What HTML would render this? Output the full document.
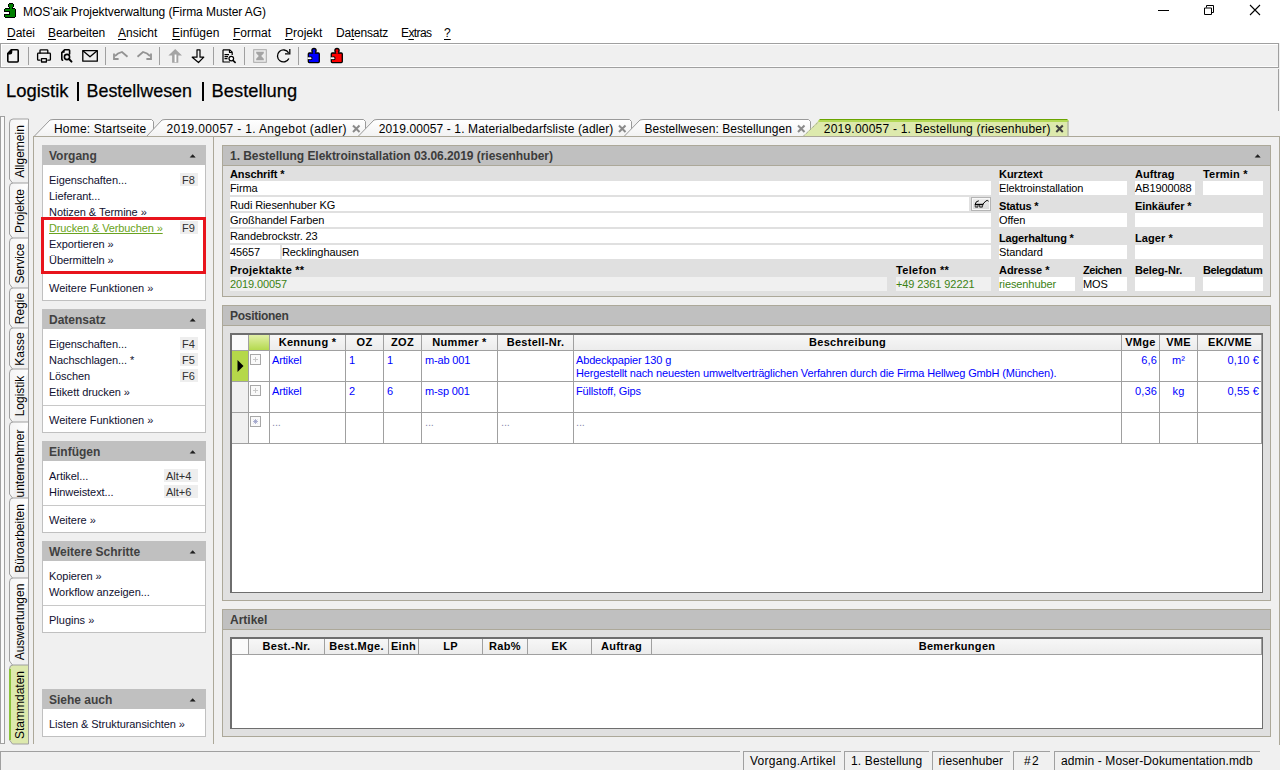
<!DOCTYPE html><html><head><meta charset="utf-8"><style>
*{margin:0;padding:0;box-sizing:border-box}
html,body{width:1280px;height:770px;overflow:hidden}
body{background:#f0f0f0;font-family:"Liberation Sans",sans-serif;position:relative;color:#000}
.t{position:absolute;white-space:nowrap}
.r{position:absolute}
svg{position:absolute;overflow:visible}
u{text-decoration:underline;text-underline-offset:2px;text-decoration-thickness:1px}
</style></head><body>
<div class="r" style="left:0px;top:0px;width:1280px;height:22px;background:#fff"></div>
<svg style="left:0;top:0" width="22" height="22" viewBox="0 0 22 22" shape-rendering="crispEdges">
<g fill="#008000"><rect x="9" y="4" width="4" height="3"/><rect x="10" y="7" width="2" height="1"/><rect x="5" y="8" width="10" height="9"/></g>
<g fill="#000"><rect x="9" y="3" width="4" height="1"/><rect x="8" y="4" width="1" height="3"/><rect x="13" y="4" width="1" height="3"/><rect x="9" y="7" width="1" height="1"/><rect x="12" y="7" width="1" height="1"/>
<rect x="5" y="8" width="5" height="1"/><rect x="12" y="8" width="3" height="1"/><rect x="4" y="9" width="1" height="3"/><rect x="4" y="14" width="1" height="3"/><rect x="15" y="9" width="1" height="8"/><rect x="5" y="17" width="10" height="1"/>
<rect x="5" y="11" width="4" height="1"/><rect x="9" y="11" width="1" height="4"/><rect x="5" y="14" width="4" height="1"/></g>
<rect x="4" y="12" width="5" height="2" fill="#fff"/>
</svg>
<div class="t " style="left:23px;top:5px;font-size:12px;line-height:14px;color:#000;letter-spacing:-0.062px">MOS&#x27;aik Projektverwaltung (Firma Muster AG)</div>
<div class="r" style="left:1158px;top:10px;width:11px;height:1px;background:#000"></div>
<svg style="left:1200px;top:0" width="20" height="20"><path d="M4.5,8 H11.5 V14.5 H4.5 Z M6.5,7.5 V5.5 H13.5 V12.5 H11.5" fill="none" stroke="#000" stroke-width="1"/></svg>
<svg style="left:1245px;top:0" width="20" height="20"><path d="M5 5l10 10M15 5l-10 10" stroke="#000" stroke-width="1.1"/></svg>
<div class="r" style="left:0px;top:22px;width:1280px;height:21px;background:#fff"></div>
<div class="t " style="left:7px;top:26px;font-size:12px;line-height:14px;color:#000;letter-spacing:0.000px"><u>D</u>atei</div>
<div class="t " style="left:48px;top:26px;font-size:12px;line-height:14px;color:#000;letter-spacing:-0.103px"><u>B</u>earbeiten</div>
<div class="t " style="left:118px;top:26px;font-size:12px;line-height:14px;color:#000;letter-spacing:0.000px"><u>A</u>nsicht</div>
<div class="t " style="left:172px;top:26px;font-size:12px;line-height:14px;color:#000;letter-spacing:0.000px"><u>E</u>infügen</div>
<div class="t " style="left:233px;top:26px;font-size:12px;line-height:14px;color:#000;letter-spacing:0.000px"><u>F</u>ormat</div>
<div class="t " style="left:285px;top:26px;font-size:12px;line-height:14px;color:#000;letter-spacing:0.000px"><u>P</u>rojekt</div>
<div class="t " style="left:336px;top:26px;font-size:12px;line-height:14px;color:#000;letter-spacing:-0.224px">Da<u>t</u>ensatz</div>
<div class="t " style="left:401px;top:26px;font-size:12px;line-height:14px;color:#000;letter-spacing:-0.583px">E<u>x</u>tras</div>
<div class="t " style="left:444px;top:26px;font-size:12px;line-height:14px;color:#000;letter-spacing:0.000px"><u>?</u></div>
<div class="r" style="left:0px;top:43px;width:1279px;height:25px;background:#f0f0f0;border:1px solid #a0a0a0"></div>
<div class="r" style="left:1px;top:44px;width:1277px;height:1px;background:#fff"></div>
<div class="r" style="left:1px;top:44px;width:1px;height:23px;background:#fff"></div>
<div class="r" style="left:1px;top:66px;width:1277px;height:1px;background:#fcfcfc"></div>
<svg style="left:0;top:0" width="360" height="70" viewBox="0 0 360 70">
<g fill="none" stroke="#000" stroke-width="1.6" stroke-linejoin="round" stroke-linecap="round">
<path d="M11.5,49.8 H17.2 Q18.2,49.8 18.2,50.8 V61 Q18.2,62 17.2,62 H8.8 Q7.8,62 7.8,61 V53.5 Z"/>
<path d="M7.8,53.8 L11.5,49.8 L11.5,52.2 Q11.5,53.8 10,53.8 Z" fill="#000"/>
<path stroke-width="1.3" d="M40,53 V50.5 Q40,49.8 40.8,49.8 H47 Q47.8,49.8 47.8,50.5 V53"/>
<path stroke-width="1.3" d="M40,60.2 H38.3 Q37.6,60.2 37.6,59.4 V54 Q37.6,53.2 38.4,53.2 H49.6 Q50.4,53.2 50.4,54 V59.4 Q50.4,60.2 49.6,60.2 H47.8"/>
<path stroke-width="1.3" d="M41.5,58.6 H46.4 V62 H41.5 Z"/>
<path stroke-width="1.3" d="M82.8,50.6 H97.3 V61.2 H82.8 Z"/>
<path stroke-width="1.3" d="M83.2,51 L90,56.8 L96.8,51"/>
<path d="M69.6,54 V50.6 Q69.6,49.8 68.8,49.8 H64.6 L61.8,52.6 V59 Q61.8,59.8 62.6,60.2"/>
<circle cx="67" cy="57" r="2.6"/>
<path d="M69,59 L71.5,61.6" stroke-width="2"/>
</g>
<path d="M61.8,52.8 L64.6,49.8 L64.6,52.8 Z" fill="#000"/>
<g fill="none" stroke="#939393" stroke-width="1.8" stroke-linejoin="miter">
<path d="M115,56 L118,53.5 L122,52 L127.5,56.8"/>
<path d="M114,53.5 V59 H118.6"/>
<path d="M150,56 L147,53.5 L143,52 L137.5,56.8"/>
<path d="M151,53.5 V59 H146.4"/>
</g>
<path d="M175.2,49 L182,55.5 H178.3 V62.7 H172.1 V55.5 H168.4 Z" fill="#a4a4a4"/>
<path d="M174.6,54.5 H176.4 V62.2 H174.6 Z" fill="#fff"/>
<path d="M197,49.8 H200 V57.2 H203.8 L198.5,62.5 L192.2,57.2 H197 Z" fill="none" stroke="#000" stroke-width="1.2" stroke-linejoin="round"/>
<g fill="none" stroke="#000" stroke-width="1.2" stroke-linejoin="round">
<path d="M223,49.8 H229.8 L232.2,52.2 V55 M223,49.8 V62 H230"/>
<path d="M229.5,50 V52.5 H232"/>
<path d="M224.5,54.6 H229 M224.5,56.6 H228 M224.5,58.6 H227.5" stroke-width="1.1"/>
<circle cx="231.3" cy="58.6" r="2.3" fill="#fff"/>
<path d="M233,60.4 L235.6,62.8" stroke-width="1.6"/>
</g>
<rect x="253.7" y="49.7" width="12.6" height="12.6" fill="#ececec" stroke="#a8a8a8" stroke-width="1"/>
<path d="M256.2,51.8 H263.8 V53.2 L261.2,56 L263.8,58.8 V60.2 H256.2 V58.8 L258.8,56 L256.2,53.2 Z" fill="#a4a4a4"/>
<path d="M288.6,52.8 A6,6 0 1 0 288.9,58.5" fill="none" stroke="#000" stroke-width="1.3"/>
<path d="M289.8,49 V53.8 H285" fill="none" stroke="#000" stroke-width="1.3"/>
<g transform="translate(0,0)" stroke="#000" stroke-width="1.3" stroke-linejoin="round">
<path d="M309.3,53 H318.3 Q319.3,53 319.3,54 V61.6 Q319.3,62.6 318.3,62.6 H309.3 Q308.3,62.6 308.3,61.6 V54 Q308.3,53 309.3,53 Z" fill="#0000ff"/>
<circle cx="314" cy="50.6" r="2.1" fill="#0000ff"/>
<rect x="312.9" y="51.5" width="2.2" height="2.2" fill="#0000ff" stroke="none"/>
<circle cx="310.6" cy="58.2" r="1.5" fill="#fff" stroke-width="1.1"/>
<rect x="307.6" y="57.3" width="2.6" height="1.8" fill="#fff" stroke="none"/>
</g>
<g transform="translate(23,0)" stroke="#000" stroke-width="1.3" stroke-linejoin="round">
<path d="M309.3,53 H318.3 Q319.3,53 319.3,54 V61.6 Q319.3,62.6 318.3,62.6 H309.3 Q308.3,62.6 308.3,61.6 V54 Q308.3,53 309.3,53 Z" fill="#ff0000"/>
<circle cx="314" cy="50.6" r="2.1" fill="#ff0000"/>
<rect x="312.9" y="51.5" width="2.2" height="2.2" fill="#ff0000" stroke="none"/>
<circle cx="310.6" cy="58.2" r="1.5" fill="#fff" stroke-width="1.1"/>
<rect x="307.6" y="57.3" width="2.6" height="1.8" fill="#fff" stroke="none"/>
</g>
<g stroke="#a0a0a0" stroke-width="1">
<path d="M28.5,47 V65 M105.5,47 V65 M159.5,47 V65 M213.5,47 V65 M244.5,47 V65 M298.5,47 V65"/>
</g>
</svg>
<svg style="left:0;top:0" width="320" height="110"><g font-family="Liberation Sans" font-size="19" fill="#000" stroke="#000" stroke-width="0.25"><text x="6" y="97" textLength="62.5" lengthAdjust="spacingAndGlyphs">Logistik</text><text x="86.5" y="97" textLength="105.5" lengthAdjust="spacingAndGlyphs">Bestellwesen</text><text x="211.6" y="97" textLength="85.5" lengthAdjust="spacingAndGlyphs">Bestellung</text></g><rect x="77" y="82" width="2" height="19" fill="#000"/><rect x="202" y="82" width="2" height="19" fill="#000"/></svg>
<div class="r" style="left:1278px;top:69px;width:1px;height:42px;background:#a0a0a0"></div>
<svg style="left:0;top:0" width="1280" height="140" viewBox="0 0 1280 140">
<defs><linearGradient id="tg" x1="0" y1="0" x2="0" y2="1"><stop offset="0" stop-color="#ffffff"/><stop offset="1" stop-color="#f2f2f2"/></linearGradient></defs>
<path d="M34,136.5 L50,120 Q52,119.5 54,119.5 L151.5,119.5 L153.5,121.5 L153.5,136.5" fill="url(#tg)" stroke="#9a9a9a" stroke-width="1"/>
<path d="M146.5,136.5 L162,120 Q164,119.5 166,119.5 L363.5,119.5 L365.5,121.5 L365.5,136.5" fill="url(#tg)" stroke="#9a9a9a" stroke-width="1"/>
<path d="M353,125.5 L359.5,132 M359.5,125.5 L353,132" stroke="#8a8a8a" stroke-width="2"/>
<path d="M358,136.5 L374,120 Q376,119.5 378,119.5 L629.5,119.5 L631.5,121.5 L631.5,136.5" fill="url(#tg)" stroke="#9a9a9a" stroke-width="1"/>
<path d="M619,125.5 L625.5,132 M625.5,125.5 L619,132" stroke="#8a8a8a" stroke-width="2"/>
<path d="M624,136.5 L640,120 Q642,119.5 644,119.5 L808.5,119.5 L810.5,121.5 L810.5,136.5" fill="url(#tg)" stroke="#9a9a9a" stroke-width="1"/>
<path d="M798,125.5 L804.5,132 M804.5,125.5 L798,132" stroke="#8a8a8a" stroke-width="2"/>
<path d="M803,136.5 L819,120 Q821,119 823,119 L1067.0,119 L1068.5,120.5 L1068.5,136.5 Z" fill="#dde9ad" stroke="none"/>
<path d="M803,136.5 L820,120.5" stroke="#8a8a8a" stroke-width="1" stroke-dasharray="1,1" fill="none"/>
<path d="M819.5,119.5 L1067.5,119.5" stroke="#6aa400" stroke-width="1"/>
<path d="M818.5,121 L1068.5,121" stroke="#b3d957" stroke-width="2"/>
<path d="M1068.0,121 L1068.0,136.5" stroke="#a0a0a0" stroke-width="1"/>
<path d="M1056.3,125.5 L1062.8,132 M1062.8,125.5 L1056.3,132" stroke="#404040" stroke-width="2"/>
<path d="M33.5,136.5 L1279.5,136.5" stroke="#aca899" stroke-width="1"/>
</svg>
<div class="t " style="left:54px;top:122px;font-size:12px;line-height:14px;color:#000;letter-spacing:0.191px">Home: Startseite</div>
<div class="t " style="left:166.5px;top:122px;font-size:12px;line-height:14px;color:#000;letter-spacing:0.355px">2019.00057 - 1. Angebot (adler)</div>
<div class="t " style="left:378.75px;top:122px;font-size:12px;line-height:14px;color:#000;letter-spacing:0.120px">2019.00057 - 1. Materialbedarfsliste (adler)</div>
<div class="t " style="left:644.4px;top:122px;font-size:12px;line-height:14px;color:#000;letter-spacing:0.029px">Bestellwesen: Bestellungen</div>
<div class="t " style="left:823.75px;top:122px;font-size:12px;line-height:14px;color:#000;letter-spacing:0.220px">2019.00057 - 1. Bestellung (riesenhuber)</div>
<div class="r" style="left:0px;top:116px;width:1px;height:628px;background:#a0a0a0"></div>
<div class="r" style="left:4px;top:116px;width:1px;height:628px;background:#a0a0a0"></div>
<div class="r" style="left:1px;top:116px;width:3px;height:1px;background:#a0a0a0"></div>
<div class="r" style="left:1px;top:117px;width:3px;height:626px;background:#fafafa"></div>
<div class="r" style="left:0px;top:743px;width:5px;height:1px;background:#a0a0a0"></div>
<svg style="left:0;top:0" width="40" height="770" viewBox="0 0 40 770">
<defs><linearGradient id="vg" x1="0" y1="0" x2="1" y2="0"><stop offset="0" stop-color="#f4f4f4"/><stop offset="1" stop-color="#ffffff"/></linearGradient></defs>
<path d="M28.5,119 L13,119 Q9.5,119 9.5,123 L9.5,179 L12.5,183" fill="url(#vg)" stroke="#a0a0a0" stroke-width="1"/>
<path d="M28.5,183 L13,183 Q9.5,183 9.5,187 L9.5,234 L12.5,238" fill="url(#vg)" stroke="#a0a0a0" stroke-width="1"/>
<path d="M28.5,238 L13,238 Q9.5,238 9.5,242 L9.5,284 L12.5,288" fill="url(#vg)" stroke="#a0a0a0" stroke-width="1"/>
<path d="M28.5,288 L13,288 Q9.5,288 9.5,292 L9.5,324 L12.5,328" fill="url(#vg)" stroke="#a0a0a0" stroke-width="1"/>
<path d="M28.5,328 L13,328 Q9.5,328 9.5,332 L9.5,365 L12.5,369" fill="url(#vg)" stroke="#a0a0a0" stroke-width="1"/>
<path d="M28.5,369 L13,369 Q9.5,369 9.5,373 L9.5,418 L12.5,422" fill="url(#vg)" stroke="#a0a0a0" stroke-width="1"/>
<path d="M28.5,422 L13,422 Q9.5,422 9.5,426 L9.5,494 L12.5,498" fill="url(#vg)" stroke="#a0a0a0" stroke-width="1"/>
<path d="M28.5,498 L13,498 Q9.5,498 9.5,502 L9.5,574 L12.5,578" fill="url(#vg)" stroke="#a0a0a0" stroke-width="1"/>
<path d="M28.5,578 L13,578 Q9.5,578 9.5,582 L9.5,661 L12.5,665" fill="url(#vg)" stroke="#a0a0a0" stroke-width="1"/>
<path d="M28.5,665 L13,665 Q9.5,665 9.5,669 L9.5,740 L12.5,744 L28.5,744" fill="#dde9ad" stroke="#a0a0a0" stroke-width="1"/>
<path d="M10,669 L10,740" stroke="#8cc43c" stroke-width="2"/>
<path d="M28.5,119 L28.5,744" stroke="#a0a0a0" stroke-width="1"/>
<path d="M33.5,136 L33.5,744" stroke="#aca899" stroke-width="1"/>
<text transform="translate(24.4,151.5) rotate(-90)" text-anchor="middle" font-family="Liberation Sans" font-size="12" fill="#000">Allgemein</text>
<text transform="translate(24.4,211.0) rotate(-90)" text-anchor="middle" font-family="Liberation Sans" font-size="12" fill="#000">Projekte</text>
<text transform="translate(24.4,263.5) rotate(-90)" text-anchor="middle" font-family="Liberation Sans" font-size="12" fill="#000">Service</text>
<text transform="translate(24.4,308.5) rotate(-90)" text-anchor="middle" font-family="Liberation Sans" font-size="12" fill="#000">Regie</text>
<text transform="translate(24.4,349.0) rotate(-90)" text-anchor="middle" font-family="Liberation Sans" font-size="12" fill="#000">Kasse</text>
<text transform="translate(24.4,396.0) rotate(-90)" text-anchor="middle" font-family="Liberation Sans" font-size="12" fill="#000">Logistik</text>
<text transform="translate(24.4,463.5) rotate(-90)" text-anchor="middle" font-family="Liberation Sans" font-size="12" fill="#000">unternehmer</text>
<text transform="translate(24.4,538.5) rotate(-90)" text-anchor="middle" font-family="Liberation Sans" font-size="12" fill="#000">Büroarbeiten</text>
<text transform="translate(24.4,622.0) rotate(-90)" text-anchor="middle" font-family="Liberation Sans" font-size="12" fill="#000">Auswertungen</text>
<text transform="translate(24.4,705.0) rotate(-90)" text-anchor="middle" font-family="Liberation Sans" font-size="12" fill="#000">Stammdaten</text>
</svg>
<div class="r" style="left:213px;top:136px;width:1px;height:608px;background:#aca899"></div>
<div class="r" style="left:42px;top:145px;width:164px;height:156px;background:#fff;border:1px solid #c0c0c0;border-top:none"></div>
<div class="r" style="left:42px;top:145px;width:164px;height:20px;background:#c0c0c0"></div>
<div class="t " style="left:49px;top:149px;font-size:12px;line-height:14px;font-weight:bold;color:#404040;">Vorgang</div>
<svg style="left:188px;top:153px" width="9" height="6"><path d="M2.2,4.3 L4.7,1.6 L7.2,4.3 Z" fill="#202020" stroke="#202020" stroke-width="0.5" stroke-linejoin="round"/></svg>
<div class="r" style="left:180px;top:173px;width:18px;height:13px;background:#eeeeee"></div>
<div class="t " style="left:182px;top:173px;font-size:11px;line-height:14px;color:#303030;">F8</div>
<div class="t " style="left:49px;top:173px;font-size:11px;line-height:14px;color:#101030;letter-spacing:-0.06px">Eigenschaften...</div>
<div class="t " style="left:49px;top:189px;font-size:11px;line-height:14px;color:#101030;letter-spacing:-0.06px">Lieferant...</div>
<div class="t " style="left:49px;top:205px;font-size:11px;line-height:14px;color:#101030;letter-spacing:-0.06px">Notizen &amp; Termine »</div>
<div class="r" style="left:180px;top:221px;width:18px;height:13px;background:#eeeeee"></div>
<div class="t " style="left:182px;top:221px;font-size:11px;line-height:14px;color:#303030;">F9</div>
<div class="t " style="left:49px;top:221px;font-size:11px;line-height:14px;color:#6aa320;letter-spacing:-0.12px;text-decoration:underline;text-underline-offset:1px">Drucken &amp; Verbuchen »</div>
<div class="t " style="left:49px;top:237px;font-size:11px;line-height:14px;color:#101030;letter-spacing:-0.06px">Exportieren »</div>
<div class="t " style="left:49px;top:253px;font-size:11px;line-height:14px;color:#101030;letter-spacing:-0.06px">Übermitteln »</div>
<div class="r" style="left:43px;top:273px;width:162px;height:1px;background:#c8c8c8"></div>
<div class="t " style="left:49px;top:281px;font-size:11px;line-height:14px;color:#101030;">Weitere Funktionen »</div>
<div class="r" style="left:42px;top:309px;width:164px;height:124px;background:#fff;border:1px solid #c0c0c0;border-top:none"></div>
<div class="r" style="left:42px;top:309px;width:164px;height:20px;background:#c0c0c0"></div>
<div class="t " style="left:49px;top:313px;font-size:12px;line-height:14px;font-weight:bold;color:#404040;">Datensatz</div>
<svg style="left:188px;top:317px" width="9" height="6"><path d="M2.2,4.3 L4.7,1.6 L7.2,4.3 Z" fill="#202020" stroke="#202020" stroke-width="0.5" stroke-linejoin="round"/></svg>
<div class="r" style="left:180px;top:337px;width:18px;height:13px;background:#eeeeee"></div>
<div class="t " style="left:182px;top:337px;font-size:11px;line-height:14px;color:#303030;">F4</div>
<div class="t " style="left:49px;top:337px;font-size:11px;line-height:14px;color:#101030;letter-spacing:-0.06px">Eigenschaften...</div>
<div class="r" style="left:180px;top:353px;width:18px;height:13px;background:#eeeeee"></div>
<div class="t " style="left:182px;top:353px;font-size:11px;line-height:14px;color:#303030;">F5</div>
<div class="t " style="left:49px;top:353px;font-size:11px;line-height:14px;color:#101030;letter-spacing:-0.06px">Nachschlagen... *</div>
<div class="r" style="left:180px;top:369px;width:18px;height:13px;background:#eeeeee"></div>
<div class="t " style="left:182px;top:369px;font-size:11px;line-height:14px;color:#303030;">F6</div>
<div class="t " style="left:49px;top:369px;font-size:11px;line-height:14px;color:#101030;letter-spacing:-0.06px">Löschen</div>
<div class="t " style="left:49px;top:385px;font-size:11px;line-height:14px;color:#101030;letter-spacing:-0.06px">Etikett drucken »</div>
<div class="r" style="left:43px;top:405px;width:162px;height:1px;background:#c8c8c8"></div>
<div class="t " style="left:49px;top:413px;font-size:11px;line-height:14px;color:#101030;">Weitere Funktionen »</div>
<div class="r" style="left:42px;top:441px;width:164px;height:92px;background:#fff;border:1px solid #c0c0c0;border-top:none"></div>
<div class="r" style="left:42px;top:441px;width:164px;height:20px;background:#c0c0c0"></div>
<div class="t " style="left:49px;top:445px;font-size:12px;line-height:14px;font-weight:bold;color:#404040;">Einfügen</div>
<svg style="left:188px;top:449px" width="9" height="6"><path d="M2.2,4.3 L4.7,1.6 L7.2,4.3 Z" fill="#202020" stroke="#202020" stroke-width="0.5" stroke-linejoin="round"/></svg>
<div class="r" style="left:164px;top:469px;width:34px;height:13px;background:#eeeeee"></div>
<div class="t " style="left:166px;top:469px;font-size:11px;line-height:14px;color:#303030;">Alt+4</div>
<div class="t " style="left:49px;top:469px;font-size:11px;line-height:14px;color:#101030;letter-spacing:-0.06px">Artikel...</div>
<div class="r" style="left:164px;top:485px;width:34px;height:13px;background:#eeeeee"></div>
<div class="t " style="left:166px;top:485px;font-size:11px;line-height:14px;color:#303030;">Alt+6</div>
<div class="t " style="left:49px;top:485px;font-size:11px;line-height:14px;color:#101030;letter-spacing:-0.06px">Hinweistext...</div>
<div class="r" style="left:43px;top:505px;width:162px;height:1px;background:#c8c8c8"></div>
<div class="t " style="left:49px;top:513px;font-size:11px;line-height:14px;color:#101030;">Weitere »</div>
<div class="r" style="left:42px;top:541px;width:164px;height:92px;background:#fff;border:1px solid #c0c0c0;border-top:none"></div>
<div class="r" style="left:42px;top:541px;width:164px;height:20px;background:#c0c0c0"></div>
<div class="t " style="left:49px;top:545px;font-size:12px;line-height:14px;font-weight:bold;color:#404040;">Weitere Schritte</div>
<svg style="left:188px;top:549px" width="9" height="6"><path d="M2.2,4.3 L4.7,1.6 L7.2,4.3 Z" fill="#202020" stroke="#202020" stroke-width="0.5" stroke-linejoin="round"/></svg>
<div class="t " style="left:49px;top:569px;font-size:11px;line-height:14px;color:#101030;letter-spacing:-0.06px">Kopieren »</div>
<div class="t " style="left:49px;top:585px;font-size:11px;line-height:14px;color:#101030;letter-spacing:-0.06px">Workflow anzeigen...</div>
<div class="r" style="left:43px;top:605px;width:162px;height:1px;background:#c8c8c8"></div>
<div class="t " style="left:49px;top:613px;font-size:11px;line-height:14px;color:#101030;">Plugins »</div>
<div class="r" style="left:42px;top:689px;width:164px;height:48px;background:#fff;border:1px solid #c0c0c0;border-top:none"></div>
<div class="r" style="left:42px;top:689px;width:164px;height:20px;background:#c0c0c0"></div>
<div class="t " style="left:49px;top:693px;font-size:12px;line-height:14px;font-weight:bold;color:#404040;">Siehe auch</div>
<svg style="left:188px;top:697px" width="9" height="6"><path d="M2.2,4.3 L4.7,1.6 L7.2,4.3 Z" fill="#202020" stroke="#202020" stroke-width="0.5" stroke-linejoin="round"/></svg>
<div class="t " style="left:49px;top:717px;font-size:11px;line-height:14px;color:#101030;letter-spacing:-0.06px">Listen &amp; Strukturansichten »</div>
<div class="r" style="left:41px;top:217px;width:165px;height:57px;border:3px solid #e8141c"></div>
<div class="r" style="left:222px;top:145px;width:1049px;height:152px;border:1px solid #aca899;background:#e0e0e0"></div>
<div class="r" style="left:223px;top:146px;width:1047px;height:19px;background:#c0c0c0"></div>
<div class="r" style="left:223px;top:165px;width:1047px;height:1px;background:#aca899"></div>
<div class="t " style="left:230px;top:149px;font-size:12px;line-height:14px;font-weight:bold;color:#3c3c3c;letter-spacing:-0.044px">1. Bestellung Elektroinstallation 03.06.2019 (riesenhuber)</div>
<svg style="left:1253px;top:153px" width="9" height="6"><path d="M2.2,4.3 L4.7,1.6 L7.2,4.3 Z" fill="#202020" stroke="#202020" stroke-width="0.5" stroke-linejoin="round"/></svg>
<div class="t " style="left:230px;top:167px;font-size:11px;line-height:14px;font-weight:bold;color:#000;letter-spacing:-0.102px">Anschrift *</div>
<div class="r" style="left:230px;top:181px;width:761px;height:14px;background:#fff"></div>
<div class="t " style="left:230px;top:181px;font-size:11px;line-height:14px;color:#000;letter-spacing:-0.1px">Firma</div>
<div class="r" style="left:230px;top:197px;width:739px;height:14px;background:#fff"></div>
<div class="t " style="left:230px;top:198px;font-size:11px;line-height:14px;color:#000;letter-spacing:-0.1px">Rudi Riesenhuber KG</div>
<div class="r" style="left:230px;top:213px;width:761px;height:14px;background:#fff"></div>
<div class="t " style="left:230px;top:213px;font-size:11px;line-height:14px;color:#000;letter-spacing:-0.1px">Großhandel Farben</div>
<div class="r" style="left:230px;top:229px;width:761px;height:14px;background:#fff"></div>
<div class="t " style="left:230px;top:229px;font-size:11px;line-height:14px;color:#000;letter-spacing:-0.1px">Randebrockstr. 23</div>
<div class="r" style="left:230px;top:245px;width:50px;height:14px;background:#fff"></div>
<div class="t " style="left:230px;top:245px;font-size:11px;line-height:14px;color:#000;letter-spacing:-0.1px">45657</div>
<div class="r" style="left:282px;top:245px;width:709px;height:14px;background:#fff"></div>
<div class="t " style="left:282px;top:245px;font-size:11px;line-height:14px;color:#000;letter-spacing:-0.1px">Recklinghausen</div>
<div class="r" style="left:971px;top:197px;width:20px;height:14px;border:1px solid #b4b4b4;box-shadow:inset 0 0 0 1px #f8f8f8;background:linear-gradient(#eeeeee,#dadada)"></div>
<svg style="left:0;top:0" width="1000" height="220"><g fill="none" stroke="#000" stroke-width="1"><path d="M975,204.5 Q976,200.8 978.8,200.8"/><path d="M982.5,204.5 L985.8,201 Q987.2,199.8 988.6,201.2"/><path d="M975,204.5 H983.5" stroke-width="1.4"/><path d="M975.2,207 H978 M979.5,207 H982.5" stroke-width="1.2"/><path d="M975.2,204.5 V207 M978,204.5 V207 M979.5,204.5 V207 M982.5,204.5 V207" stroke-width="0.6"/></g></svg>
<div class="t " style="left:230px;top:263px;font-size:11px;line-height:14px;font-weight:bold;color:#000;letter-spacing:0.245px">Projektakte **</div>
<div class="r" style="left:230px;top:277px;width:657px;height:14px;background:#f0f0f0"></div>
<div class="t " style="left:230px;top:277px;font-size:11px;line-height:14px;color:#3c8214;letter-spacing:-0.1px">2019.00057</div>
<div class="t " style="left:896px;top:263px;font-size:11px;line-height:14px;font-weight:bold;color:#000;letter-spacing:0.326px">Telefon **</div>
<div class="r" style="left:896px;top:277px;width:95px;height:14px;background:#f0f0f0"></div>
<div class="t " style="left:896px;top:277px;font-size:11px;line-height:14px;color:#3c8214;letter-spacing:-0.1px">+49 2361 92221</div>
<div class="t " style="left:999px;top:167px;font-size:11px;line-height:14px;font-weight:bold;color:#000;letter-spacing:-0.062px">Kurztext</div>
<div class="r" style="left:999px;top:181px;width:128px;height:14px;background:#fff"></div>
<div class="t " style="left:999px;top:181px;font-size:11px;line-height:14px;color:#000;letter-spacing:-0.1px">Elektroinstallation</div>
<div class="t " style="left:1135px;top:167px;font-size:11px;line-height:14px;font-weight:bold;color:#000;letter-spacing:0.044px">Auftrag</div>
<div class="r" style="left:1135px;top:181px;width:60px;height:14px;background:#fff"></div>
<div class="t " style="left:1135px;top:181px;font-size:11px;line-height:14px;color:#000;letter-spacing:-0.1px">AB1900088</div>
<div class="t " style="left:1203px;top:167px;font-size:11px;line-height:14px;font-weight:bold;color:#000;letter-spacing:0.191px">Termin *</div>
<div class="r" style="left:1203px;top:181px;width:60px;height:14px;background:#fff"></div>
<div class="t " style="left:999px;top:199px;font-size:11px;line-height:14px;font-weight:bold;color:#000;letter-spacing:-0.196px">Status *</div>
<div class="r" style="left:999px;top:213px;width:128px;height:14px;background:#fff"></div>
<div class="t " style="left:999px;top:213px;font-size:11px;line-height:14px;color:#000;letter-spacing:-0.1px">Offen</div>
<div class="t " style="left:1135px;top:199px;font-size:11px;line-height:14px;font-weight:bold;color:#000;letter-spacing:-0.082px">Einkäufer *</div>
<div class="r" style="left:1135px;top:213px;width:128px;height:14px;background:#fff"></div>
<div class="t " style="left:999px;top:231px;font-size:11px;line-height:14px;font-weight:bold;color:#000;letter-spacing:-0.163px">Lagerhaltung *</div>
<div class="r" style="left:999px;top:245px;width:128px;height:14px;background:#fff"></div>
<div class="t " style="left:999px;top:245px;font-size:11px;line-height:14px;color:#000;letter-spacing:-0.1px">Standard</div>
<div class="t " style="left:1135px;top:231px;font-size:11px;line-height:14px;font-weight:bold;color:#000;letter-spacing:0.084px">Lager *</div>
<div class="r" style="left:1135px;top:245px;width:128px;height:14px;background:#fff"></div>
<div class="t " style="left:999px;top:263px;font-size:11px;line-height:14px;font-weight:bold;color:#000;letter-spacing:-0.042px">Adresse *</div>
<div class="r" style="left:999px;top:277px;width:76px;height:14px;background:#fff"></div>
<div class="t " style="left:999px;top:277px;font-size:11px;line-height:14px;color:#3c8214;letter-spacing:-0.1px">riesenhuber</div>
<div class="t " style="left:1083px;top:263px;font-size:11px;line-height:14px;font-weight:bold;color:#000;letter-spacing:-0.442px">Zeichen</div>
<div class="r" style="left:1083px;top:277px;width:44px;height:14px;background:#fff"></div>
<div class="t " style="left:1083px;top:277px;font-size:11px;line-height:14px;color:#000;letter-spacing:-0.1px">MOS</div>
<div class="t " style="left:1135px;top:263px;font-size:11px;line-height:14px;font-weight:bold;color:#000;letter-spacing:-0.116px">Beleg-Nr.</div>
<div class="r" style="left:1135px;top:277px;width:60px;height:14px;background:#fff"></div>
<div class="t " style="left:1203px;top:263px;font-size:11px;line-height:14px;font-weight:bold;color:#000;letter-spacing:-0.357px">Belegdatum</div>
<div class="r" style="left:1203px;top:277px;width:60px;height:14px;background:#fff"></div>
<div class="r" style="left:222px;top:305px;width:1049px;height:296px;border:1px solid #aca899;background:#e0e0e0"></div>
<div class="r" style="left:223px;top:306px;width:1047px;height:19px;background:#c0c0c0"></div>
<div class="r" style="left:223px;top:325px;width:1047px;height:1px;background:#aca899"></div>
<div class="t " style="left:230px;top:309px;font-size:12px;line-height:14px;font-weight:bold;color:#3c3c3c;letter-spacing:-0.291px">Positionen</div>
<div class="r" style="left:222px;top:609px;width:1049px;height:128px;border:1px solid #aca899;background:#e0e0e0"></div>
<div class="r" style="left:223px;top:610px;width:1047px;height:19px;background:#c0c0c0"></div>
<div class="r" style="left:223px;top:629px;width:1047px;height:1px;background:#aca899"></div>
<div class="t " style="left:230px;top:613px;font-size:12px;line-height:14px;font-weight:bold;color:#3c3c3c;letter-spacing:0.000px">Artikel</div>
<div class="r" style="left:230px;top:333px;width:1033px;height:260px;background:#fff;border-left:2px solid #6e6e6e;border-top:2px solid #6e6e6e;border-right:1px solid #6e6e6e;border-bottom:1px solid #6e6e6e"></div>
<div class="r" style="left:232px;top:335px;width:1030px;height:15px;background:linear-gradient(#f7f7f7,#ececec)"></div>
<div class="r" style="left:232px;top:350px;width:1030px;height:1px;background:#a0a0a0"></div>
<div class="r" style="left:248px;top:335px;width:1px;height:15px;background:#a0a0a0"></div>
<div class="r" style="left:269px;top:335px;width:1px;height:15px;background:#a0a0a0"></div>
<div class="r" style="left:345px;top:335px;width:1px;height:15px;background:#a0a0a0"></div>
<div class="r" style="left:383px;top:335px;width:1px;height:15px;background:#a0a0a0"></div>
<div class="r" style="left:421px;top:335px;width:1px;height:15px;background:#a0a0a0"></div>
<div class="r" style="left:497px;top:335px;width:1px;height:15px;background:#a0a0a0"></div>
<div class="r" style="left:573px;top:335px;width:1px;height:15px;background:#a0a0a0"></div>
<div class="r" style="left:1121px;top:335px;width:1px;height:15px;background:#a0a0a0"></div>
<div class="r" style="left:1159px;top:335px;width:1px;height:15px;background:#a0a0a0"></div>
<div class="r" style="left:1197px;top:335px;width:1px;height:15px;background:#a0a0a0"></div>
<div class="t" style="left:270px;top:335px;width:75px;text-align:center;font-size:11px;line-height:14px;font-weight:bold;letter-spacing:0.3px">Kennung *</div>
<div class="t" style="left:346px;top:335px;width:37px;text-align:center;font-size:11px;line-height:14px;font-weight:bold;letter-spacing:0.3px">OZ</div>
<div class="t" style="left:384px;top:335px;width:37px;text-align:center;font-size:11px;line-height:14px;font-weight:bold;letter-spacing:0.3px">ZOZ</div>
<div class="t" style="left:422px;top:335px;width:75px;text-align:center;font-size:11px;line-height:14px;font-weight:bold;letter-spacing:0.3px">Nummer *</div>
<div class="t" style="left:498px;top:335px;width:75px;text-align:center;font-size:11px;line-height:14px;font-weight:bold;letter-spacing:0.3px">Bestell-Nr.</div>
<div class="t" style="left:574px;top:335px;width:547px;text-align:center;font-size:11px;line-height:14px;font-weight:bold;letter-spacing:0.3px">Beschreibung</div>
<div class="t" style="left:1122px;top:335px;width:37px;text-align:center;font-size:11px;line-height:14px;font-weight:bold;letter-spacing:0.3px">VMge</div>
<div class="t" style="left:1160px;top:335px;width:37px;text-align:center;font-size:11px;line-height:14px;font-weight:bold;letter-spacing:0.3px">VME</div>
<div class="t" style="left:1198px;top:335px;width:64px;text-align:center;font-size:11px;line-height:14px;font-weight:bold;letter-spacing:0.3px">EK/VME</div>
<div class="r" style="left:249px;top:335px;width:20px;height:15px;background:linear-gradient(#e2f0a8,#b4d94e)"></div>
<div class="r" style="left:232px;top:335px;width:16px;height:15px;background:#fafafa"></div>
<div class="r" style="left:232px;top:381px;width:1029px;height:1px;background:#a0a0a0"></div>
<div class="r" style="left:248px;top:351px;width:1px;height:30px;background:#a0a0a0"></div>
<div class="r" style="left:269px;top:351px;width:1px;height:30px;background:#a0a0a0"></div>
<div class="r" style="left:345px;top:351px;width:1px;height:30px;background:#a0a0a0"></div>
<div class="r" style="left:383px;top:351px;width:1px;height:30px;background:#a0a0a0"></div>
<div class="r" style="left:421px;top:351px;width:1px;height:30px;background:#a0a0a0"></div>
<div class="r" style="left:497px;top:351px;width:1px;height:30px;background:#a0a0a0"></div>
<div class="r" style="left:573px;top:351px;width:1px;height:30px;background:#a0a0a0"></div>
<div class="r" style="left:1121px;top:351px;width:1px;height:30px;background:#a0a0a0"></div>
<div class="r" style="left:1159px;top:351px;width:1px;height:30px;background:#a0a0a0"></div>
<div class="r" style="left:1197px;top:351px;width:1px;height:30px;background:#a0a0a0"></div>
<div class="r" style="left:232px;top:351px;width:16px;height:30px;background:#b5d84a"></div>
<div class="r" style="left:250px;top:354px;width:11px;height:11px;border:1px solid #a8a8a8;background:#fafafa"></div>
<svg style="left:250px;top:354px" width="11" height="11"><path d="M3,5.5 h5 M5.5,3 v5" stroke="#c8c8c8" stroke-width="1"/></svg>
<div class="r" style="left:232px;top:412px;width:1029px;height:1px;background:#a0a0a0"></div>
<div class="r" style="left:248px;top:382px;width:1px;height:30px;background:#a0a0a0"></div>
<div class="r" style="left:269px;top:382px;width:1px;height:30px;background:#a0a0a0"></div>
<div class="r" style="left:345px;top:382px;width:1px;height:30px;background:#a0a0a0"></div>
<div class="r" style="left:383px;top:382px;width:1px;height:30px;background:#a0a0a0"></div>
<div class="r" style="left:421px;top:382px;width:1px;height:30px;background:#a0a0a0"></div>
<div class="r" style="left:497px;top:382px;width:1px;height:30px;background:#a0a0a0"></div>
<div class="r" style="left:573px;top:382px;width:1px;height:30px;background:#a0a0a0"></div>
<div class="r" style="left:1121px;top:382px;width:1px;height:30px;background:#a0a0a0"></div>
<div class="r" style="left:1159px;top:382px;width:1px;height:30px;background:#a0a0a0"></div>
<div class="r" style="left:1197px;top:382px;width:1px;height:30px;background:#a0a0a0"></div>
<div class="r" style="left:232px;top:382px;width:16px;height:30px;background:#f0f0f0"></div>
<div class="r" style="left:250px;top:385px;width:11px;height:11px;border:1px solid #a8a8a8;background:#fafafa"></div>
<svg style="left:250px;top:385px" width="11" height="11"><path d="M3,5.5 h5 M5.5,3 v5" stroke="#c8c8c8" stroke-width="1"/></svg>
<div class="r" style="left:232px;top:443px;width:1029px;height:1px;background:#a0a0a0"></div>
<div class="r" style="left:248px;top:413px;width:1px;height:30px;background:#a0a0a0"></div>
<div class="r" style="left:269px;top:413px;width:1px;height:30px;background:#a0a0a0"></div>
<div class="r" style="left:345px;top:413px;width:1px;height:30px;background:#a0a0a0"></div>
<div class="r" style="left:383px;top:413px;width:1px;height:30px;background:#a0a0a0"></div>
<div class="r" style="left:421px;top:413px;width:1px;height:30px;background:#a0a0a0"></div>
<div class="r" style="left:497px;top:413px;width:1px;height:30px;background:#a0a0a0"></div>
<div class="r" style="left:573px;top:413px;width:1px;height:30px;background:#a0a0a0"></div>
<div class="r" style="left:1121px;top:413px;width:1px;height:30px;background:#a0a0a0"></div>
<div class="r" style="left:1159px;top:413px;width:1px;height:30px;background:#a0a0a0"></div>
<div class="r" style="left:1197px;top:413px;width:1px;height:30px;background:#a0a0a0"></div>
<div class="r" style="left:232px;top:413px;width:16px;height:30px;background:#f0f0f0"></div>
<div class="r" style="left:250px;top:416px;width:11px;height:11px;border:1px solid #a8a8a8;background:#fafafa"></div>
<svg style="left:250px;top:416px" width="11" height="11"><path d="M3,5.5 h5 M5.5,3 v5 M3.7,3.7 l3.6,3.6 M7.3,3.7 l-3.6,3.6" stroke="#9aa0c8" stroke-width="0.8"/></svg>
<svg style="left:232px;top:351px" width="16" height="30"><path d="M5.5,9 L11.5,15 L5.5,21 Z" fill="#000"/></svg>
<div class="t " style="left:272px;top:353px;font-size:11px;line-height:14px;color:#0000ff;letter-spacing:-0.15px">Artikel</div>
<div class="t " style="left:349px;top:353px;font-size:11px;line-height:14px;color:#0000ff;letter-spacing:-0.15px">1</div>
<div class="t " style="left:387px;top:353px;font-size:11px;line-height:14px;color:#0000ff;letter-spacing:-0.15px">1</div>
<div class="t " style="left:425px;top:353px;font-size:11px;line-height:14px;color:#0000ff;letter-spacing:-0.15px">m-ab 001</div>
<div class="t " style="left:576px;top:353px;font-size:11px;line-height:14px;color:#0000ff;letter-spacing:-0.15px">Abdeckpapier 130 g</div>
<div class="t " style="left:576px;top:366px;font-size:11px;line-height:14px;color:#0000ff;letter-spacing:-0.15px">Hergestellt nach neuesten umweltverträglichen Verfahren durch die Firma Hellweg GmbH (München).</div>
<div class="t" style="left:1123px;top:353px;width:34px;text-align:right;font-size:11px;line-height:14px;color:#0000ff;letter-spacing:0.15px">6,6</div>
<div class="t" style="left:1160px;top:353px;width:37px;text-align:center;font-size:11px;line-height:14px;color:#0000ff;letter-spacing:0.15px">m²</div>
<div class="t" style="left:1199px;top:353px;width:60px;text-align:right;font-size:11px;line-height:14px;color:#0000ff;letter-spacing:0.15px">0,10 €</div>
<div class="t " style="left:272px;top:384px;font-size:11px;line-height:14px;color:#0000ff;letter-spacing:-0.15px">Artikel</div>
<div class="t " style="left:349px;top:384px;font-size:11px;line-height:14px;color:#0000ff;letter-spacing:-0.15px">2</div>
<div class="t " style="left:387px;top:384px;font-size:11px;line-height:14px;color:#0000ff;letter-spacing:-0.15px">6</div>
<div class="t " style="left:425px;top:384px;font-size:11px;line-height:14px;color:#0000ff;letter-spacing:-0.15px">m-sp 001</div>
<div class="t " style="left:576px;top:384px;font-size:11px;line-height:14px;color:#0000ff;letter-spacing:-0.15px">Füllstoff, Gips</div>
<div class="t" style="left:1123px;top:384px;width:34px;text-align:right;font-size:11px;line-height:14px;color:#0000ff;letter-spacing:0.15px">0,36</div>
<div class="t" style="left:1160px;top:384px;width:37px;text-align:center;font-size:11px;line-height:14px;color:#0000ff;letter-spacing:0.15px">kg</div>
<div class="t" style="left:1199px;top:384px;width:60px;text-align:right;font-size:11px;line-height:14px;color:#0000ff;letter-spacing:0.15px">0,55 €</div>
<div class="t " style="left:272px;top:415px;font-size:11px;line-height:14px;color:#8c8cb0;letter-spacing:-0.15px">...</div>
<div class="t " style="left:425px;top:415px;font-size:11px;line-height:14px;color:#8c8cb0;letter-spacing:-0.15px">...</div>
<div class="t " style="left:501px;top:415px;font-size:11px;line-height:14px;color:#8c8cb0;letter-spacing:-0.15px">...</div>
<div class="t " style="left:576px;top:415px;font-size:11px;line-height:14px;color:#8c8cb0;letter-spacing:-0.15px">...</div>
<div class="r" style="left:230px;top:637px;width:1033px;height:92px;background:#fff;border-left:2px solid #6e6e6e;border-top:2px solid #6e6e6e;border-right:1px solid #6e6e6e;border-bottom:1px solid #6e6e6e"></div>
<div class="r" style="left:232px;top:639px;width:1030px;height:15px;background:linear-gradient(#f7f7f7,#ececec)"></div>
<div class="r" style="left:232px;top:654px;width:1030px;height:1px;background:#a0a0a0"></div>
<div class="r" style="left:248px;top:639px;width:1px;height:15px;background:#a0a0a0"></div>
<div class="r" style="left:324px;top:639px;width:1px;height:15px;background:#a0a0a0"></div>
<div class="r" style="left:388px;top:639px;width:1px;height:15px;background:#a0a0a0"></div>
<div class="r" style="left:418px;top:639px;width:1px;height:15px;background:#a0a0a0"></div>
<div class="r" style="left:482px;top:639px;width:1px;height:15px;background:#a0a0a0"></div>
<div class="r" style="left:527px;top:639px;width:1px;height:15px;background:#a0a0a0"></div>
<div class="r" style="left:591px;top:639px;width:1px;height:15px;background:#a0a0a0"></div>
<div class="r" style="left:651px;top:639px;width:1px;height:15px;background:#a0a0a0"></div>
<div class="t" style="left:249px;top:639px;width:75px;text-align:center;font-size:11px;line-height:14px;font-weight:bold;letter-spacing:0.3px">Best.-Nr.</div>
<div class="t" style="left:325px;top:639px;width:63px;text-align:center;font-size:11px;line-height:14px;font-weight:bold;letter-spacing:0.3px">Best.Mge.</div>
<div class="t" style="left:389px;top:639px;width:29px;text-align:center;font-size:11px;line-height:14px;font-weight:bold;letter-spacing:0.3px">Einh</div>
<div class="t" style="left:419px;top:639px;width:63px;text-align:center;font-size:11px;line-height:14px;font-weight:bold;letter-spacing:0.3px">LP</div>
<div class="t" style="left:483px;top:639px;width:44px;text-align:center;font-size:11px;line-height:14px;font-weight:bold;letter-spacing:0.3px">Rab%</div>
<div class="t" style="left:528px;top:639px;width:63px;text-align:center;font-size:11px;line-height:14px;font-weight:bold;letter-spacing:0.3px">EK</div>
<div class="t" style="left:592px;top:639px;width:59px;text-align:center;font-size:11px;line-height:14px;font-weight:bold;letter-spacing:0.3px">Auftrag</div>
<div class="t" style="left:652px;top:639px;width:610px;text-align:center;font-size:11px;line-height:14px;font-weight:bold;letter-spacing:0.3px">Bemerkungen</div>
<div class="r" style="left:232px;top:639px;width:16px;height:15px;background:#fafafa"></div>
<div class="r" style="left:1261px;top:335px;width:1px;height:109px;background:#a0a0a0"></div>
<div class="r" style="left:1261px;top:639px;width:1px;height:15px;background:#a0a0a0"></div>
<div class="r" style="left:1279px;top:136px;width:1px;height:609px;background:#aca899"></div>
<div class="r" style="left:33px;top:744px;width:1247px;height:0px;background:#aca899"></div>
<div class="r" style="left:0px;top:751px;width:740px;height:19px;border-left:1px solid #a0a0a0;border-top:1px solid #a0a0a0"></div>
<div class="r" style="left:743px;top:751px;width:98px;height:19px;border-left:1px solid #a0a0a0;border-top:1px solid #a0a0a0"></div>
<div class="t " style="left:750px;top:754px;font-size:12px;line-height:14px;color:#000;letter-spacing:0.282px">Vorgang.Artikel</div>
<div class="r" style="left:844px;top:751px;width:85px;height:19px;border-left:1px solid #a0a0a0;border-top:1px solid #a0a0a0"></div>
<div class="t " style="left:851px;top:754px;font-size:12px;line-height:14px;color:#000;letter-spacing:0.142px">1. Bestellung</div>
<div class="r" style="left:932px;top:751px;width:78px;height:19px;border-left:1px solid #a0a0a0;border-top:1px solid #a0a0a0"></div>
<div class="t " style="left:938.5px;top:754px;font-size:12px;line-height:14px;color:#000;letter-spacing:0.120px">riesenhuber</div>
<div class="r" style="left:1013px;top:751px;width:37px;height:19px;border-left:1px solid #a0a0a0;border-top:1px solid #a0a0a0"></div>
<div class="t " style="left:1024px;top:754px;font-size:12px;line-height:14px;color:#000;letter-spacing:1.278px">#2</div>
<div class="r" style="left:1054px;top:751px;width:206px;height:19px;border-left:1px solid #a0a0a0;border-top:1px solid #a0a0a0"></div>
<div class="t " style="left:1061px;top:754px;font-size:12px;line-height:14px;color:#000;letter-spacing:0.117px">admin - Moser-Dokumentation.mdb</div>
</body></html>
